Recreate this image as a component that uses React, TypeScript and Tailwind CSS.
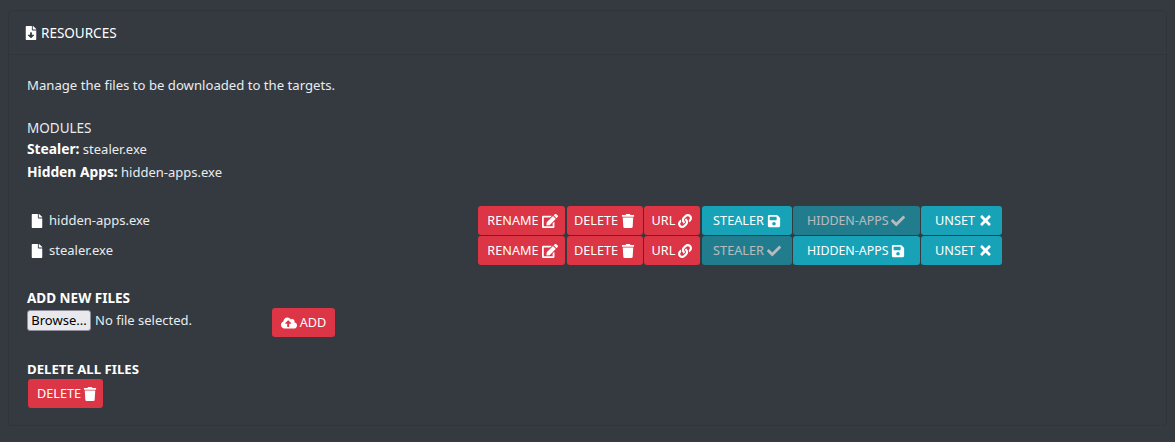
import { ReactNode } from "react";
import { FaCheck, FaCloudUploadAlt, FaEdit, FaFile, FaFileDownload, FaLink, FaSave, FaTimes, FaTrash } from "react-icons/fa";

function Btn({ color, off, className, children }: { color: "red" | "teal"; off?: boolean; className: string; children: ReactNode }) {
  const bg = color === "red" ? "bg-[#dc3545]" : "bg-[#17a2b8]";
  return (
    <span className={`flex h-[29px] items-center justify-center gap-[3px] rounded-[3px] pt-px text-white ${bg} ${off ? "opacity-65" : ""} ${className}`}>
      {children}
    </span>
  );
}

function FileRow({ name, stealer, hidden }: { name: string; stealer?: boolean; hidden?: boolean }) {
  return (
    <div className="flex h-[30px] items-center">
      <div className="flex w-[451px] items-center gap-[5px] pl-[3px] pt-px text-[13px] text-[#e9ecef]">
        <FaFile size={14} className="text-white" />
        <span>{name}</span>
      </div>
      <div className="flex gap-[1.5px]">
        <Btn color="red" className="w-[87px] pl-[2px] text-[12.7px]">RENAME <FaEdit size={16} /></Btn>
        <Btn color="red" className="w-[76px] text-[12.7px]">DELETE <FaTrash size={14} /></Btn>
        <Btn color="red" className="w-[56px] text-[12.7px]">URL <FaLink size={14} /></Btn>
        {stealer ? (
          <Btn color="teal" off className="w-[90px] pl-px text-[12.7px]">STEALER <FaCheck size={14} /></Btn>
        ) : (
          <Btn color="teal" className="w-[90px] pl-px text-[12.7px]">STEALER <FaSave size={14} /></Btn>
        )}
        {hidden ? (
          <Btn color="teal" off className="w-[126.5px] text-[12.4px]"><span className="mt-px">HIDDEN-APPS</span> <FaCheck size={14} /></Btn>
        ) : (
          <Btn color="teal" className="w-[126.5px] text-[12.4px]"><span className="mt-px">HIDDEN-APPS</span> <FaSave size={14} /></Btn>
        )}
        <Btn color="teal" className="w-[81px] pl-[5px] text-[12.7px]">UNSET <FaTimes size={15} /></Btn>
      </div>
    </div>
  );
}

export default function App() {
  return (
    <div className="h-[442px] overflow-hidden bg-[#343a40] px-[8px] pt-[10px] font-['Noto_Sans','Open_Sans',sans-serif] text-[13px] text-[#e9ecef]">
      <div className="h-[416px] rounded-[4px] border border-[#2f353a] bg-[#343a40]">
        <div className="flex h-[44px] items-center gap-[3px] border-b border-[#2f353a] pl-[15px] pt-px text-[13.5px] text-white">
          <FaFileDownload size={14} />
          <span>RESOURCES</span>
        </div>
        <div className="px-[18px]">
          <p className="mt-[20px] text-[13.15px] leading-[20px]">Manage the files to be downloaded to the targets.</p>
          <p className="mt-[23px] text-[13.5px] leading-[20px]">MODULES</p>
          <p className="leading-[21px]"><b className="text-[13.8px] text-white">Stealer:</b> stealer.exe</p>
          <p className="leading-[23px]"><b className="text-[13.8px] text-white">Hidden Apps:</b> hidden-apps.exe</p>
          <div className="mt-[21px]">
            <FileRow name="hidden-apps.exe" hidden />
            <FileRow name="stealer.exe" stealer />
          </div>
          <div className="mt-[23px] flex items-start">
            <div className="w-[245px]">
              <p className="text-[13.5px] font-bold leading-[20px] text-white">ADD NEW FILES</p>
              <div className="mt-[2px] flex items-center gap-[4px]">
                <span className="flex h-[21px] w-[64px] items-center justify-center rounded-[3px] border border-[#8f8f9d] bg-[#e9e9ed] text-[13px] text-black">Browse...</span>
                <span>No file selected.</span>
              </div>
            </div>
            <Btn color="red" className="mt-[20px] w-[63px] text-[12.7px]"><FaCloudUploadAlt size={16} /> ADD</Btn>
          </div>
          <p className="mt-[22px] text-[13.2px] font-bold leading-[20px] text-white">DELETE ALL FILES</p>
          <Btn color="red" className="ml-px w-[75px] pl-[3px] text-[12.7px]">DELETE <FaTrash size={14} className="-ml-px" /></Btn>
        </div>
      </div>
    </div>
  );
}
